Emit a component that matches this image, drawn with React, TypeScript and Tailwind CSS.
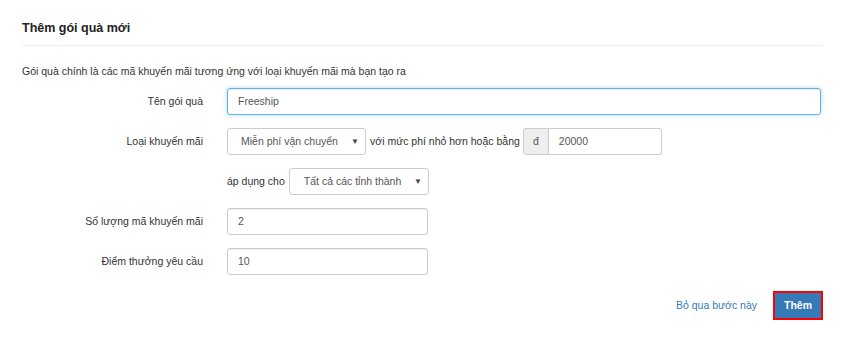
const font = { fontFamily: '"Liberation Sans", Arial, sans-serif' };

/** Nhãn bên trái của mỗi dòng form */
function Label({ children }: { children?: React.ReactNode }) {
  return <div className="w-[181px] shrink-0 text-right text-[10.5px] text-[#333]">{children}</div>;
}

function Caret() {
  return <span className="text-[8px] leading-none text-[#444]">▼</span>;
}

export default function App() {
  return (
    <div className="min-h-screen bg-white text-[#333]" style={font}>
      <div className="w-[823px] pl-[22px] pt-[21px]">
        {/* Tiêu đề */}
        <h3 className="border-b border-[#eee] pb-[10px] text-[12.5px] font-bold leading-[14px] text-[#222]">
          Thêm gói quà mới
        </h3>
        <p className="mt-[19px] text-[10.5px] leading-[13px]">
          Gói quà chính là các mã khuyến mãi tương ứng với loại khuyến mãi mà bạn tạo ra
        </p>

        {/* Form */}
        <div className="mt-[10px] flex flex-col gap-[13px] whitespace-nowrap">
          <div className="flex items-center">
            <Label>Tên gói quà</Label>
            <div className="ml-[24px] mr-[2px] flex h-[27px] flex-1 items-center rounded-[3px] border border-[#66afe9] px-[10px] text-[10.5px] text-[#555] shadow-[inset_0_1px_1px_rgba(0,0,0,.075),0_0_4px_rgba(102,175,233,.5)]">
              Freeship
            </div>
          </div>

          <div className="flex items-center">
            <Label>Loại khuyến mãi</Label>
            <div className="ml-[24px] flex h-[27px] w-[139px] items-center justify-between rounded-[3px] border border-[#ccc] pl-[13px] pr-[6px] text-[10.5px] text-[#555]">
              <span>Miễn phí vận chuyển</span>
              <Caret />
            </div>
            <span className="ml-[4px] text-[10.5px]">với mức phí nhỏ hơn hoặc bằng</span>
            <div className="ml-[3px] flex h-[27px] w-[139px] text-[10.5px] text-[#555]">
              <div className="flex w-[26px] items-center justify-center rounded-l-[3px] border border-[#ccc] bg-[#eee]">
                đ
              </div>
              <div className="flex flex-1 items-center rounded-r-[3px] border border-l-0 border-[#ccc] px-[10px]">
                20000
              </div>
            </div>
          </div>

          <div className="flex items-center">
            <Label />
            <span className="ml-[24px] text-[10.5px]">áp dụng cho</span>
            <div className="ml-[4px] flex h-[27px] w-[140px] items-center justify-between rounded-[3px] border border-[#ccc] pl-[14px] pr-[6px] text-[10.5px] text-[#555]">
              <span>Tất cả các tỉnh thành</span>
              <Caret />
            </div>
          </div>

          <div className="flex items-center">
            <Label>Số lượng mã khuyến mãi</Label>
            <div className="ml-[24px] flex h-[27px] w-[201px] items-center rounded-[3px] border border-[#ccc] px-[10px] text-[10.5px] text-[#555] shadow-[inset_0_1px_1px_rgba(0,0,0,.075)]">
              2
            </div>
          </div>

          <div className="flex items-center">
            <Label>Điểm thưởng yêu cầu</Label>
            <div className="ml-[24px] flex h-[27px] w-[201px] items-center rounded-[3px] border border-[#ccc] px-[10px] text-[10.5px] text-[#555] shadow-[inset_0_1px_1px_rgba(0,0,0,.075)]">
              10
            </div>
          </div>
        </div>

        {/* Nút hành động */}
        <div className="mt-[16px] flex items-center justify-end gap-[16px]">
          <a className="text-[10.5px] text-[#337ab7]">Bỏ qua bước này</a>
          <button className="flex h-[29px] w-[50px] items-center justify-center border-2 border-[#ff0000] bg-[#337ab7] text-[10.5px] font-bold text-white">
            Thêm
          </button>
        </div>
      </div>
    </div>
  );
}
